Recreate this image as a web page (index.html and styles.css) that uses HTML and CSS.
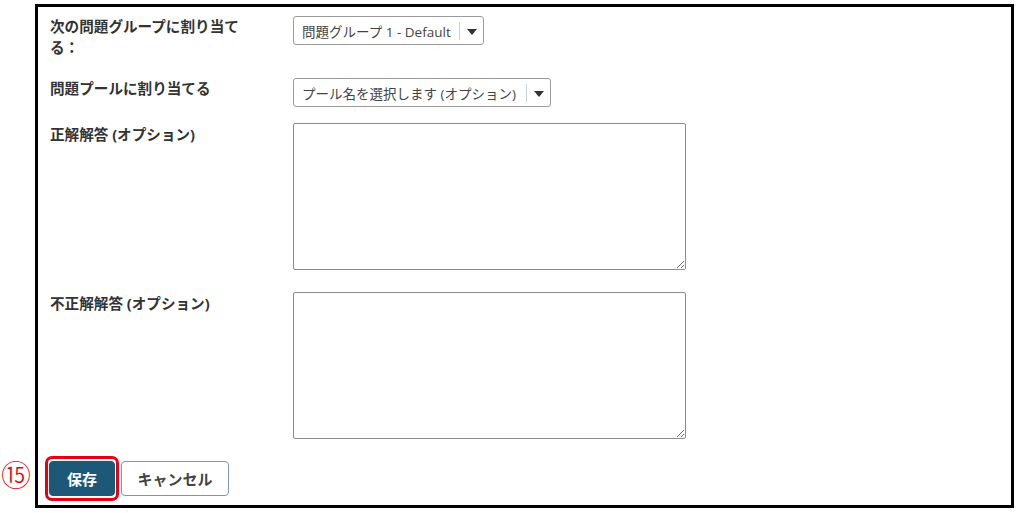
FILE: index.html
```html
<!DOCTYPE html>
<html lang="ja">
<head>
<meta charset="utf-8">
<title>問題の編集</title>
<link rel="stylesheet" href="styles.css">
</head>
<body>
<div class="frame">
  <div class="field field-group">
    <div class="label">次の問題グループに割り当てる：</div>
    <div class="control">
      <div class="select select-group">
        <span class="select-text">問題グループ 1 - Default</span>
        <span class="select-divider"></span>
        <span class="select-arrow"></span>
      </div>
    </div>
  </div>
  <div class="field field-pool">
    <div class="label">問題プールに割り当てる</div>
    <div class="control">
      <div class="select select-pool">
        <span class="select-text">プール名を選択します (オプション)</span>
        <span class="select-divider"></span>
        <span class="select-arrow"></span>
      </div>
    </div>
  </div>
  <div class="field field-correct">
    <div class="label label-area">正解解答 (オプション)</div>
    <div class="control">
      <textarea class="area"></textarea>
    </div>
  </div>
  <div class="field field-wrong">
    <div class="label label-area">不正解解答 (オプション)</div>
    <div class="control">
      <textarea class="area"></textarea>
    </div>
  </div>
  <div class="actions">
    <span class="marker">⑮</span>
    <span class="save-wrap"><button class="btn btn-primary">保存</button></span>
    <button class="btn btn-secondary">キャンセル</button>
  </div>
</div>
</body>
</html>
```
FILE: styles.css
```css
html, body {
  margin: 0;
  padding: 0;
  background: #ffffff;
}

body {
  font-family: "Open Sans", "Noto Sans CJK JP", sans-serif;
  color: #333333;
}

.frame {
  margin: 4px 3px 0 35px;
  border: 3px solid #000000;
  padding: 9px 12px 9px 12px;
  box-sizing: border-box;
  height: 504px;
}

.field {
  display: grid;
  grid-template-columns: 205px 1fr;
  column-gap: 38px;
  align-items: start;
}

.field-group { margin-bottom: 20px; }
.field-pool { margin-bottom: 16px; }
.field-correct { margin-bottom: 22px; }
.field-wrong { margin-bottom: 22px; }

.label {
  font-family: "Open Sans", "Noto Sans CJK JP", sans-serif;
  font-weight: 700;
  font-size: 14.6px;
  line-height: 21px;
  padding-top: 0;
  color: #333333;
}

.label-area {
  padding-top: 1px;
}

.select {
  display: flex;
  align-items: center;
  height: 29px;
  box-sizing: border-box;
  border: 1px solid #9b9b9b;
  border-radius: 3px;
  background: #ffffff;
  font-size: 13.5px;
  color: #444444;
}

.select-group { width: 191px; }
.select-pool { width: 258px; }

.select-text {
  flex: 1;
  padding-left: 8px;
  white-space: nowrap;
  overflow: hidden;
}

.select-divider {
  width: 1px;
  height: 18px;
  background: #cfcfcf;
}

.select-arrow {
  width: 23px;
  display: flex;
  justify-content: center;
  align-items: center;
}

.select-arrow::before {
  content: "";
  border-left: 5px solid transparent;
  border-right: 5px solid transparent;
  border-top: 6px solid #333333;
  margin-top: 2px;
}

.area {
  display: block;
  width: 393px;
  height: 147px;
  box-sizing: border-box;
  border: 1px solid #8c8c8c;
  border-radius: 2px;
  margin: 0;
  padding: 4px;
  font-family: "Open Sans", "Noto Sans CJK JP", sans-serif;
}

.actions {
  position: relative;
  display: flex;
  align-items: center;
  gap: 6px;
  margin-left: -1px;
}

.marker {
  position: absolute;
  left: -48px;
  top: -3px;
  font-family: "Noto Sans CJK JP", serif;
  font-weight: 300;
  font-size: 30px;
  line-height: 1;
  color: #e60012;
}

.save-wrap {
  position: relative;
  display: inline-flex;
}

.save-wrap::after {
  content: "";
  position: absolute;
  left: -4px;
  right: -4px;
  top: -5px;
  bottom: -5px;
  border: 3px solid #e60012;
  border-radius: 7px;
  pointer-events: none;
}

.btn {
  height: 35px;
  box-sizing: border-box;
  border-radius: 4px;
  font-family: "Open Sans", "Noto Sans CJK JP", sans-serif;
  font-weight: 700;
  font-size: 15px;
  padding: 0;
  margin: 0;
}

.btn-primary {
  width: 66px;
  background: #1d5878;
  color: #ffffff;
  border: 1px solid #1d5878;
}

.btn-secondary {
  width: 108px;
  background: #ffffff;
  color: #444444;
  border: 1px solid #7c98ab;
}
```
